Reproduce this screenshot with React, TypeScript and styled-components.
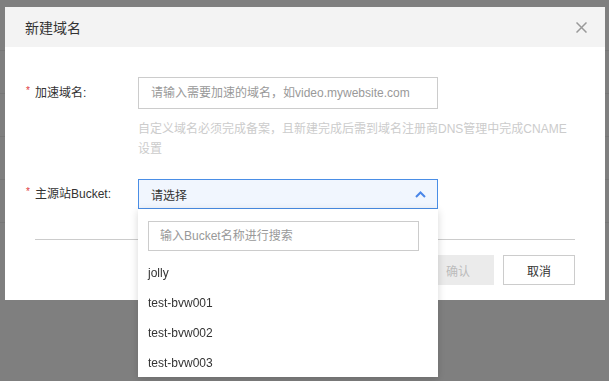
import React from 'react';
import styled, { createGlobalStyle } from 'styled-components';

const GlobalStyle = createGlobalStyle`
  html, body {
    margin: 0;
    padding: 0;
  }
  body {
    font-family: "Liberation Sans", "Noto Sans CJK SC", sans-serif;
    background: #fff;
  }
  * {
    box-sizing: border-box;
  }
`;

// page behind the dialog
const Page = styled.div`
  padding-top: 8px;
`;

const PageRow = styled.div`
  height: 43px;
  border-bottom: 1px solid #eee;
`;

const Overlay = styled.div`
  position: fixed;
  inset: 0;
  background: rgba(0, 0, 0, 0.5);
  padding: 7px 4px 0 5px;
`;

const Modal = styled.div`
  width: 600px;
  height: 293px;
  background: #fff;
  display: flex;
  flex-direction: column;
`;

const Header = styled.div`
  height: 40px;
  background: #f3f3f3;
  padding: 0 18px 0 20px;
  display: flex;
  align-items: center;
  justify-content: space-between;
`;

const Title = styled.h3`
  margin: 0;
  font-size: 14px;
  font-weight: normal;
  color: #333;
`;

const CloseButton = styled.span`
  display: flex;
  width: 11px;
  height: 11px;
  cursor: pointer;
`;

const Body = styled.div`
  padding: 30px 30px 15px;
`;

const FormRow = styled.div<{ $gap?: number }>`
  display: flex;
  align-items: flex-start;
  margin-top: ${(p) => p.$gap ?? 0}px;
`;

const Label = styled.label<{ $height: number }>`
  width: 103px;
  flex-shrink: 0;
  font-size: 12px;
  color: #333;
  line-height: ${(p) => p.$height}px;
  &::before {
    content: '*';
    display: inline-block;
    width: 9px;
    margin-left: -9px;
    font-size: 10px;
    line-height: 10px;
    vertical-align: 3px;
    color: #e0393e;
  }
`;

const Field = styled.div`
  flex: 1;
`;

const TextInput = styled.input`
  display: block;
  width: 300px;
  height: 32px;
  border: 1px solid #ccc;
  padding: 0 12px;
  font: inherit;
  font-size: 12px;
  color: #333;
  outline: none;
  &::placeholder {
    color: #999;
  }
`;

const Help = styled.p`
  margin: 10px 0 0;
  font-size: 12px;
  line-height: 20px;
  color: #ccc;
`;

const SelectWrap = styled.div`
  position: relative;
  width: 300px;
`;

const SelectBox = styled.div`
  height: 30px;
  border: 1px solid #4a8ee6;
  background: #f1f6fe;
  padding: 0 11px 0 12px;
  display: flex;
  align-items: center;
  justify-content: space-between;
  font-size: 12px;
  color: #333;
`;

const Dropdown = styled.div`
  position: absolute;
  top: 100%;
  left: 0;
  width: 300px;
  height: 168px;
  overflow: hidden;
  background: #fff;
  padding: 12px 19px 0 10px;
  box-shadow: 0 2px 8px rgba(0, 0, 0, 0.16);
  z-index: 10;
`;

const SearchInput = styled(TextInput)`
  width: 100%;
  height: 30px;
  padding: 0 11px;
`;

const OptionList = styled.ul`
  list-style: none;
  margin: 7px 0 0;
  padding: 0;
`;

const Option = styled.li`
  height: 30px;
  line-height: 30px;
  font-size: 12px;
  color: #333;
  cursor: pointer;
`;

const Divider = styled.hr`
  margin: 30px 0 0;
  border: 0;
  border-top: 1px solid #ccc;
`;

const Footer = styled.div`
  margin-top: 15px;
  display: flex;
  justify-content: flex-end;
  gap: 9px;
`;

const Button = styled.button<{ $disabled?: boolean }>`
  width: 72px;
  height: 30px;
  font: inherit;
  font-size: 12px;
  border: 1px solid ${(p) => (p.$disabled ? '#ebebeb' : '#ccc')};
  background: ${(p) => (p.$disabled ? '#ebebeb' : '#fff')};
  color: ${(p) => (p.$disabled ? '#bbb' : '#333')};
  cursor: ${(p) => (p.$disabled ? 'not-allowed' : 'pointer')};
`;

const buckets = ['jolly', 'test-bvw001', 'test-bvw002', 'test-bvw003'];

export default function App() {
  return (
    <>
      <GlobalStyle />
      <Page>
        {[0, 1, 2, 3, 4].map((i) => (
          <PageRow key={i} />
        ))}
      </Page>
      <Overlay>
        <Modal>
          <Header>
            <Title>新建域名</Title>
            <CloseButton>
              <svg width="11" height="11" viewBox="0 0 11 11">
                <path d="M0.5 0.5L10.5 10.5M10.5 0.5L0.5 10.5" stroke="#999" strokeWidth="1.5" fill="none" />
              </svg>
            </CloseButton>
          </Header>
          <Body>
            <FormRow>
              <Label $height={32}>加速域名:</Label>
              <Field>
                <TextInput placeholder="请输入需要加速的域名，如video.mywebsite.com" />
                <Help>自定义域名必须完成备案，且新建完成后需到域名注册商DNS管理中完成CNAME设置</Help>
              </Field>
            </FormRow>
            <FormRow $gap={20}>
              <Label $height={30}>主源站Bucket:</Label>
              <Field>
                <SelectWrap>
                  <SelectBox>
                    <span>请选择</span>
                    <svg width="11" height="7" viewBox="0 0 11 7">
                      <polyline points="1,6 5.5,1.5 10,6" stroke="#4a86e8" strokeWidth="2" fill="none" />
                    </svg>
                  </SelectBox>
                  <Dropdown>
                    <SearchInput placeholder="输入Bucket名称进行搜索" />
                    <OptionList>
                      {buckets.map((b) => (
                        <Option key={b}>{b}</Option>
                      ))}
                    </OptionList>
                  </Dropdown>
                </SelectWrap>
              </Field>
            </FormRow>
            <Divider />
            <Footer>
              <Button $disabled>确认</Button>
              <Button>取消</Button>
            </Footer>
          </Body>
        </Modal>
      </Overlay>
    </>
  );
}
